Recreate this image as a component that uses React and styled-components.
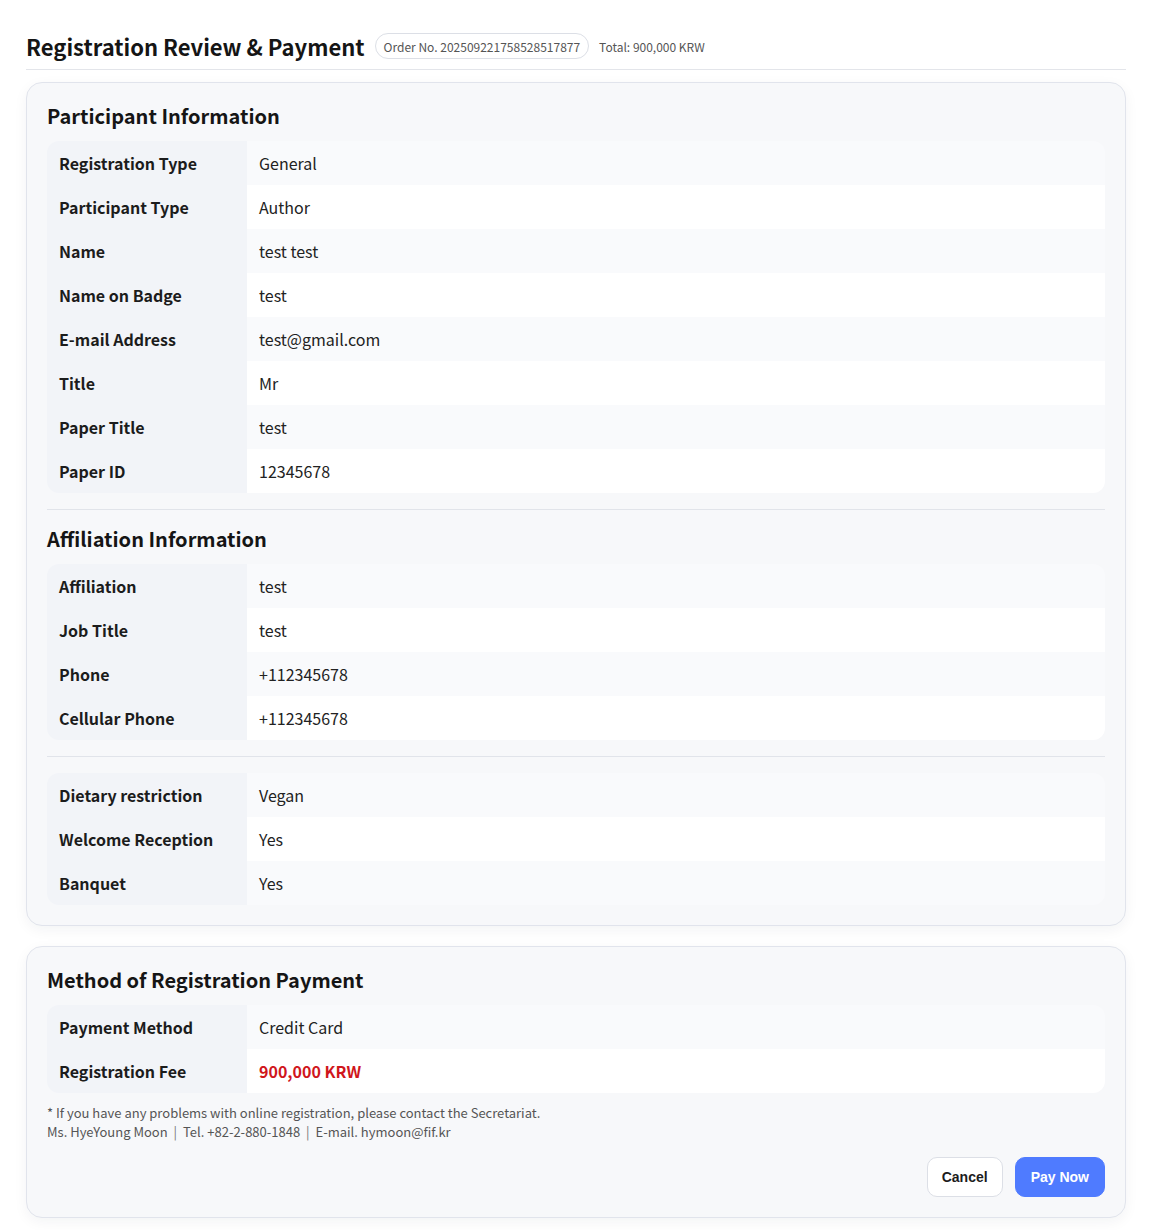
import React from "react";
import styled, { createGlobalStyle } from "styled-components";

const GlobalStyle = createGlobalStyle`
  html, body {
    margin: 0;
    padding: 0;
    background: #ffffff;
  }
  body {
    font-family: "Noto Sans CJK KR", "Noto Sans", sans-serif;
    color: #1a1a1a;
  }
`;

const participant = [
  ["Registration Type", "General"],
  ["Participant Type", "Author"],
  ["Name", "test test"],
  ["Name on Badge", "test"],
  ["E-mail Address", "test@gmail.com"],
  ["Title", "Mr"],
  ["Paper Title", "test"],
  ["Paper ID", "12345678"],
];

const affiliation = [
  ["Affiliation", "test"],
  ["Job Title", "test"],
  ["Phone", "+112345678"],
  ["Cellular Phone", "+112345678"],
];

const extras = [
  ["Dietary restriction", "Vegan"],
  ["Welcome Reception", "Yes"],
  ["Banquet", "Yes"],
];

function InfoTable({ rows }) {
  return (
    <Table>
      {rows.map(([label, value, highlight], i) => (
        <Row key={label}>
          <Label>{label}</Label>
          <Value $odd={i % 2 === 0} $highlight={highlight}>{value}</Value>
        </Row>
      ))}
    </Table>
  );
}

export default function App() {
  return (
    <>
      <GlobalStyle />
      <Page>
        <Header>
          <Title>Registration Review &amp; Payment</Title>
          <OrderPill>Order No. 202509221758528517877</OrderPill>
          <TotalText>Total: 900,000 KRW</TotalText>
        </Header>

        <Card>
          <SectionTitle>Participant Information</SectionTitle>
          <InfoTable rows={participant} />
          <Divider />
          <SectionTitle>Affiliation Information</SectionTitle>
          <InfoTable rows={affiliation} />
          <Divider />
          <InfoTable rows={extras} />
        </Card>

        <Card>
          <SectionTitle>Method of Registration Payment</SectionTitle>
          <InfoTable
            rows={[
              ["Payment Method", "Credit Card"],
              ["Registration Fee", "900,000 KRW", true],
            ]}
          />
          <Note>
            * If you have any problems with online registration, please contact the Secretariat.
            <br />
            Ms. HyeYoung Moon <Sep>|</Sep> Tel. +82-2-880-1848 <Sep>|</Sep> E-mail. hymoon@fif.kr
          </Note>
          <Actions>
            <CancelButton>Cancel</CancelButton>
            <PayButton>Pay Now</PayButton>
          </Actions>
        </Card>
      </Page>
    </>
  );
}

const Page = styled.div`
  width: 1100px;
  margin: 0 0 0 26px;
  padding: 30px 0 12px;
  display: flex;
  flex-direction: column;
  gap: 20px;
`;

const Header = styled.div`
  display: flex;
  align-items: center;
  gap: 10px;
  padding-bottom: 7px;
  border-bottom: 1px solid #e3e5ea;
  margin-bottom: -8px;
`;

const Title = styled.h1`
  margin: 0;
  font-size: 22px;
  line-height: 32px;
  font-weight: 700;
  color: #151515;
`;

const OrderPill = styled.span`
  display: inline-flex;
  align-items: center;
  height: 24px;
  padding: 0 8px;
  border: 1px solid #dcdfe6;
  border-radius: 13px;
  font-size: 12px;
  color: #555;
  background: #fff;
`;

const TotalText = styled.span`
  font-size: 12px;
  color: #555;
`;

const Card = styled.section`
  background: #f7f8fa;
  border: 1px solid #e1e4ec;
  border-radius: 16px;
  padding: 20px;
  box-shadow: 0 4px 14px rgba(20, 30, 60, 0.05);
  display: flex;
  flex-direction: column;
`;

const SectionTitle = styled.h2`
  margin: 0 0 12px;
  font-size: 20px;
  line-height: 26px;
  font-weight: 700;
  color: #151515;
`;

const Table = styled.div`
  display: flex;
  flex-direction: column;
  border-radius: 12px;
  overflow: hidden;
`;

const Row = styled.div`
  display: grid;
  grid-template-columns: 200px 1fr;
  height: 44px;
`;

const Label = styled.div`
  display: flex;
  align-items: center;
  padding: 0 12px;
  background: #f2f4f8;
  font-size: 16px;
  font-weight: 600;
  color: #1c1c1c;
`;

const Value = styled.div`
  display: flex;
  align-items: center;
  padding: 0 12px;
  background: ${(p) => (p.$odd ? "#f9fafc" : "#ffffff")};
  font-size: 16px;
  font-weight: ${(p) => (p.$highlight ? 700 : 400)};
  color: ${(p) => (p.$highlight ? "#d0161b" : "#222")};
`;

const Divider = styled.hr`
  border: 0;
  border-top: 1px solid #e1e4ea;
  margin: 16px 0;
  width: 100%;
`;

const Note = styled.p`
  margin: 10px 0 0;
  font-size: 13px;
  line-height: 19px;
  color: #555;
`;

const Sep = styled.span`
  margin: 0 3px;
  color: #777;
`;

const Actions = styled.div`
  display: flex;
  justify-content: flex-end;
  gap: 12px;
  margin-top: 16px;
`;

const BaseButton = styled.button`
  height: 40px;
  padding: 0 15px;
  border-radius: 10px;
  font-family: "Liberation Sans", Arial, sans-serif;
  font-size: 14px;
  font-weight: 700;
  cursor: pointer;
`;

const CancelButton = styled(BaseButton)`
  background: #fff;
  border: 1px solid #dcdfe6;
  color: #1c1c1c;
  padding: 0 14px;
`;

const PayButton = styled(BaseButton)`
  background: #4f7bff;
  border: 1px solid #4f7bff;
  color: #fff;
`;
